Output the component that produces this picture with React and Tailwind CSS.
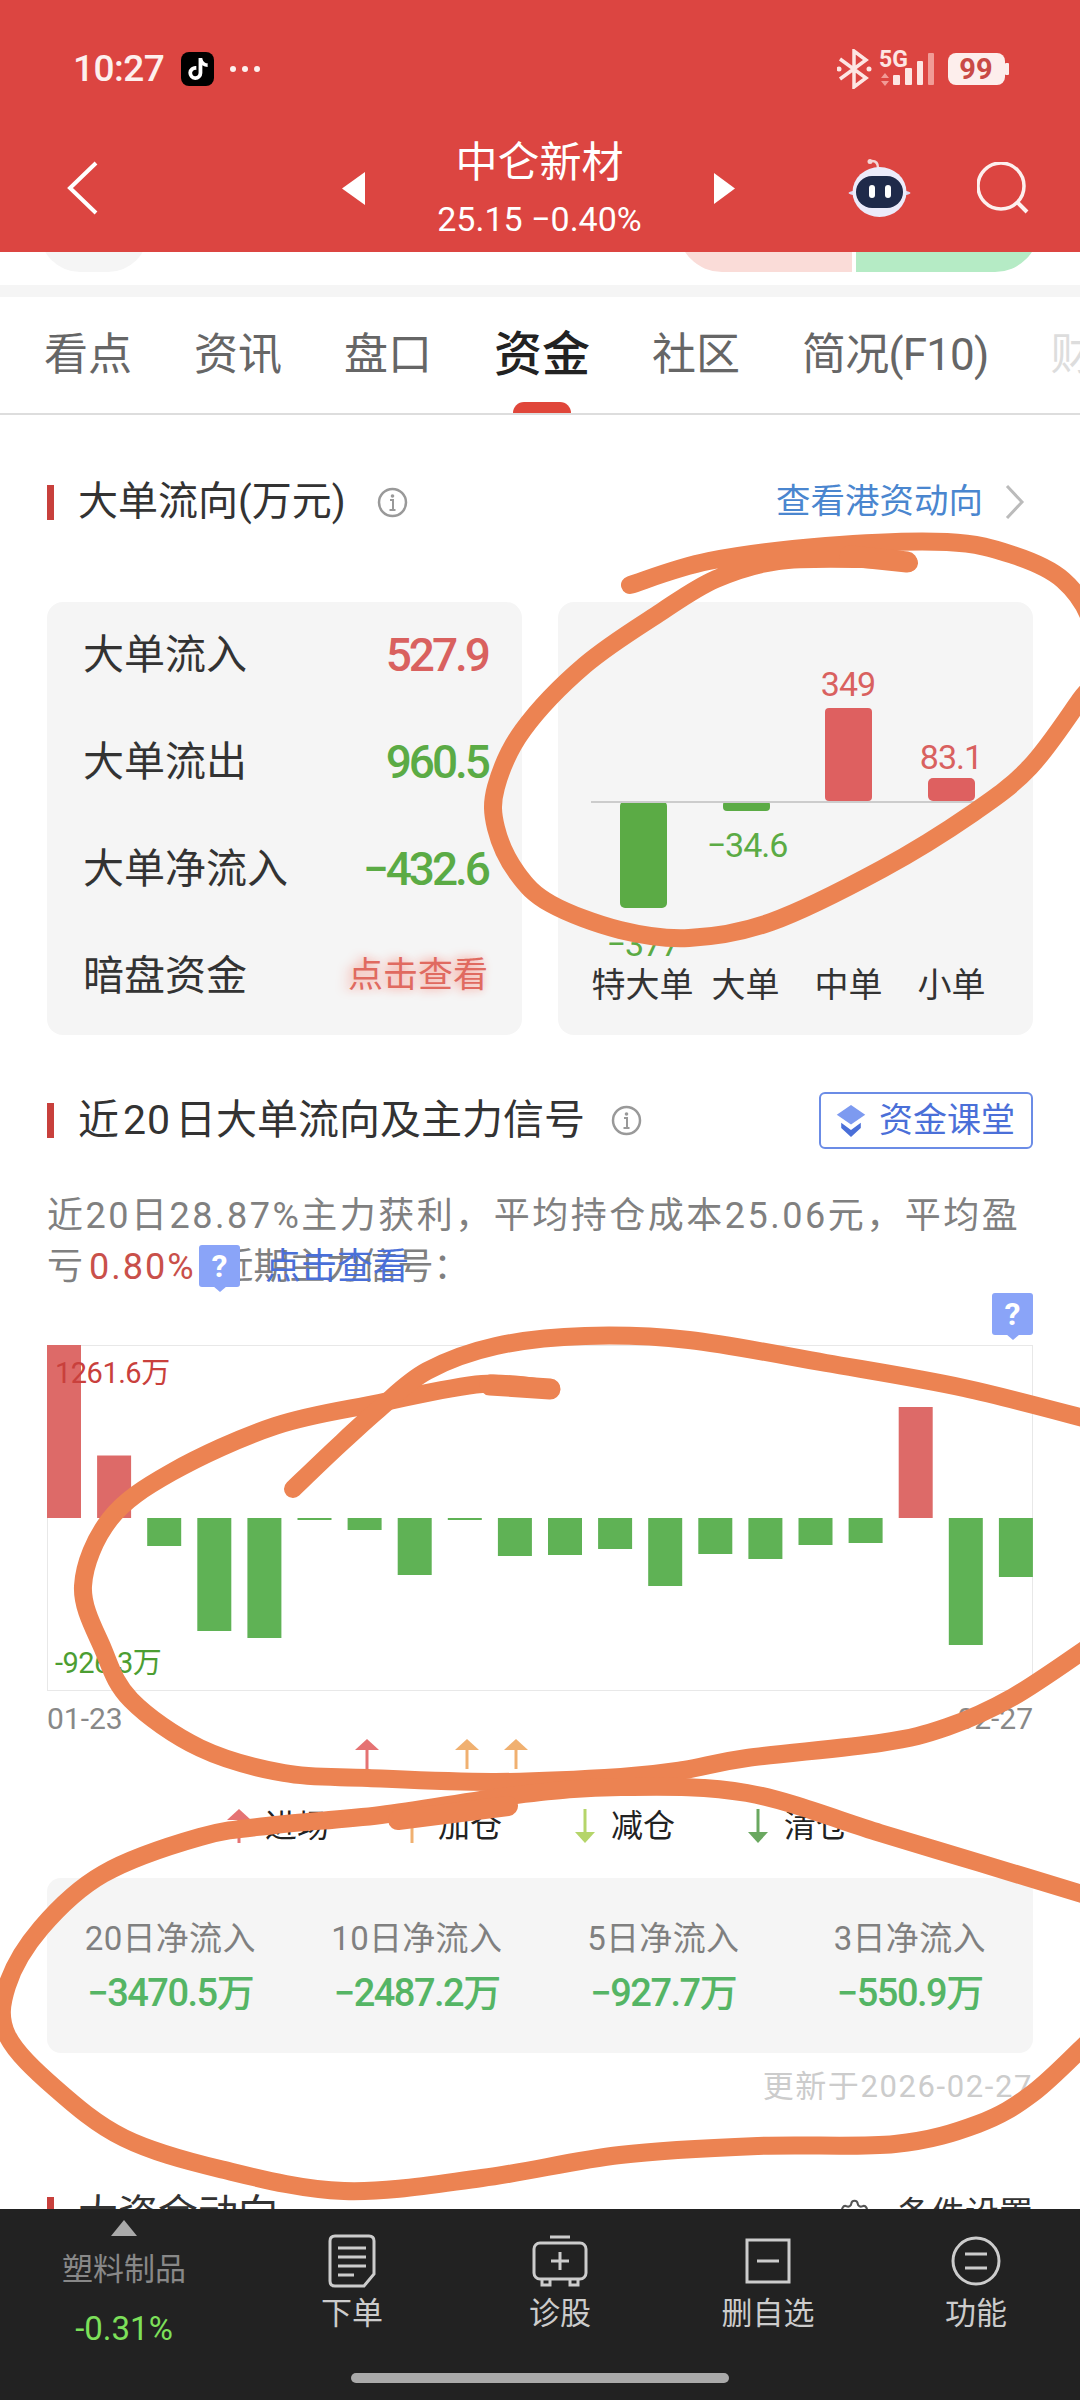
import React from 'react';
import { Settings } from 'lucide-react';
import { FaTiktok } from 'react-icons/fa6';

const dailyBars = [173, 62.5, -28, -113, -120, -2, -12, -57, -2, -38, -37, -31, -68, -36, -41, -27, -25, 111, -127, -59];

const stats = [
  { label: '20日净流入', value: '−3470.5万' },
  { label: '10日净流入', value: '−2487.2万' },
  { label: '5日净流入', value: '−927.7万' },
  { label: '3日净流入', value: '−550.9万' },
];

const legend = [
  { label: '进场', color: '#e57373', up: true },
  { label: '加仓', color: '#f0b070', up: true },
  { label: '减仓', color: '#b5d56a', up: false },
  { label: '清仓', color: '#6aa860', up: false },
];

// hand drawn rings on top of the screenshot
const strokes = [
  { w: 18, pts: [[630, 585], [709, 561], [826, 546], [947, 542], [1013, 555], [1063, 580], [1092, 625], [1092, 680], [1080, 700], [1030, 767], [973, 813], [882, 869], [771, 922], [689, 938], [620, 930], [551, 904], [517, 873], [496, 828], [496, 787], [523, 730], [585, 665], [661, 612], [716, 579], [778, 561], [861, 559], [909, 563]] },
  { w: 21, pts: [[850, 556], [907, 562]] },
  { w: 18, pts: [[551, 1389], [482, 1384], [379, 1403], [275, 1426], [172, 1472], [110, 1519], [83, 1586], [103, 1649], [131, 1700], [200, 1748], [284, 1773], [368, 1778], [495, 1782], [621, 1777], [684, 1770], [747, 1758], [880, 1743], [947, 1727], [1013, 1697], [1090, 1646]] },
  { w: 21, pts: [[490, 1385], [550, 1389]] },
  { w: 18, pts: [[1095, 1421], [964, 1388], [826, 1363], [689, 1340], [585, 1336], [496, 1346], [427, 1371], [379, 1409], [337, 1447], [293, 1489]] },
  { w: 18, pts: [[1095, 1898], [980, 1863], [880, 1833], [747, 1793], [621, 1787], [516, 1795], [381, 1815], [275, 1825], [200, 1837], [103, 1874], [41, 1928], [7, 1986], [7, 2035], [55, 2088], [124, 2138], [220, 2169], [344, 2191], [482, 2178], [620, 2155], [758, 2146], [895, 2144], [978, 2124], [1033, 2093], [1090, 2040]] },
  { w: 20, pts: [[508, 1806], [398, 1820]] },
];

const smoothPath = (pts) => {
  let d = `M${pts[0][0]} ${pts[0][1]}`;
  for (let i = 0; i < pts.length - 1; i++) {
    const p0 = pts[i - 1] || pts[i];
    const p1 = pts[i];
    const p2 = pts[i + 1];
    const p3 = pts[i + 2] || p2;
    d += ` C${p1[0] + (p2[0] - p0[0]) / 6} ${p1[1] + (p2[1] - p0[1]) / 6} ${p2[0] - (p3[0] - p1[0]) / 6} ${p2[1] - (p3[1] - p1[1]) / 6} ${p2[0]} ${p2[1]}`;
  }
  return d;
};

const InfoIcon = () => (
  <svg width="31" height="31" viewBox="0 0 31 31" className="shrink-0">
    <circle cx="15.5" cy="15.5" r="13.5" fill="none" stroke="#999" strokeWidth="2.5" />
    <circle cx="15.5" cy="9" r="1.8" fill="#999" />
    <path d="M13 13h3v10M12.5 23h6" fill="none" stroke="#999" strokeWidth="2" />
  </svg>
);

const Arrow = ({ color, up, height = 34 }) => (
  <svg width="24" height={height} viewBox={`0 0 24 ${height}`} className="shrink-0">
    {up ? (
      <>
        <path d={`M12 ${height}V8`} stroke={color} strokeWidth="3" />
        <path d="M12 0L24 11H0Z" fill={color} />
      </>
    ) : (
      <>
        <path d={`M12 0V${height - 8}`} stroke={color} strokeWidth="3" />
        <path d={`M12 ${height}L22 ${height - 11}H2Z`} fill={color} />
      </>
    )}
  </svg>
);

const HelpBadge = ({ className }) => (
  <div className={`w-[41px] h-[42px] bg-[#8aa4f8] rounded-[3px] flex items-center justify-center text-white text-[32px] tracking-normal font-bold ${className}`}>
    ?
    <span className="absolute left-1/2 -translate-x-1/2 -bottom-[5px] w-0 h-0 border-l-[7px] border-r-[7px] border-t-[6px] border-l-transparent border-r-transparent border-t-[#8aa4f8]" />
  </div>
);

const SectionTitle = ({ children }) => (
  <div className="flex items-center">
    <div className="w-[7px] h-[35px] bg-[#c8403c]" />
    <span className="ml-[24px] text-[40px] leading-[40px] text-[#333] whitespace-nowrap">{children}</span>
  </div>
);

const FlowRow = ({ label, value, color }) => (
  <div className="h-[107px] shrink-0 flex items-center justify-between">
    <span className="text-[41px] text-[#333]">{label}</span>
    <span className={`text-[46px] font-medium tracking-[-3px] ${color}`}>{value}</span>
  </div>
);

const ToolItem = ({ icon, label }) => (
  <div className="flex flex-col items-center pt-[24px]">
    <div className="h-[56px] flex items-center">{icon}</div>
    <span className="mt-[5px] text-[31px] leading-[40px] text-[#ccc]">{label}</span>
  </div>
);

const MiniChart = () => (
  <svg width="475" height="358" viewBox="0 0 475 358" className="block">
    <rect x="62" y="199" width="47" height="107" rx="5" fill="#5bab45" />
    <rect x="165" y="199" width="47" height="10" rx="4" fill="#5bab45" />
    <rect x="267" y="106" width="47" height="93" rx="4" fill="#de6060" />
    <rect x="370" y="176" width="47" height="23" rx="5" fill="#de6060" />
    <rect x="33" y="199" width="390" height="2" fill="#ccc" />
    <text x="290" y="94" textAnchor="middle" fontSize="34" letterSpacing="-1" fill="#d9615f">349</text>
    <text x="393" y="167" textAnchor="middle" fontSize="34" letterSpacing="-1" fill="#d9615f">83.1</text>
    <text x="189" y="255" textAnchor="middle" fontSize="34" letterSpacing="-1" fill="#5bab45">−34.6</text>
    <text x="85" y="354" textAnchor="middle" fontSize="34" letterSpacing="-1" fill="#5bab45">−377</text>
  </svg>
);

const DailyChart = () => (
  <div className="relative h-[346px] border border-[#e8e8e8]">
    <svg width="986" height="346" viewBox="0 0 986 346" className="absolute -left-px -top-px">
      {dailyBars.map((h, i) => {
        const x = i * 50.1;
        return h > 0
          ? <rect key={i} x={x} y={173 - h} width="34" height={h} fill="#dd6a68" />
          : <rect key={i} x={x} y={173} width="34" height={-h} fill="#5fb255" />;
      })}
    </svg>
    <span className="absolute left-[7px] top-[7px] text-[29px] leading-[40px] tracking-[-0.5px] text-[#c9403c]">1261.6万</span>
    <span className="absolute left-[7px] bottom-[7px] text-[29px] leading-[40px] tracking-[-0.5px] text-[#4c9e32]">-926.3万</span>
  </div>
);

export default function App() {
  return (
    <div className="relative w-[1080px] h-[2400px] overflow-hidden bg-white flex flex-col font-['Roboto','Noto_Sans_CJK_SC',sans-serif]">
      {/* red header */}
      <header className="h-[252px] shrink-0 bg-[#dc4541] text-[#fdf0ee]">
        <div className="h-[40px] mt-[49px] flex items-center relative">
          <span className="ml-[73px] text-[37px] font-medium tracking-[-0.5px]">10:27</span>
          <div className="ml-[17px] w-[33px] h-[34px] bg-black rounded-[8px] flex items-center justify-center">
            <FaTiktok className="text-white text-[22px]" />
          </div>
          <div className="ml-[16px] flex gap-[6px]">
            <i className="w-[6px] h-[6px] rounded-full bg-[#fdf0ee]" />
            <i className="w-[6px] h-[6px] rounded-full bg-[#fdf0ee]" />
            <i className="w-[6px] h-[6px] rounded-full bg-[#fdf0ee]" />
          </div>
          <svg width="172" height="40" viewBox="0 0 172 40" className="ml-auto mr-[71px]">
            <path d="M3 10L29 29L17 38V2L29 11L3 30" fill="none" stroke="#fde6e3" strokeWidth="3.5" />
            <circle cx="2" cy="20" r="2.5" fill="#fde6e3" />
            <circle cx="32" cy="20" r="2.5" fill="#fde6e3" />
            <text x="42" y="18" fontSize="23" fontWeight="700" fill="#fde6e3">5G</text>
            <path d="M48 24l4 5h-8zM48 37l4-5h-8z" fill="#f19b96" />
            <rect x="56" y="26" width="7" height="10" rx="1" fill="#fde6e3" />
            <rect x="68" y="19" width="7" height="17" rx="1" fill="#fde6e3" />
            <rect x="80" y="12" width="6" height="24" rx="1" fill="#fde6e3" />
            <rect x="91" y="4" width="6" height="32" rx="1" fill="#f19b96" />
            <rect x="111" y="4" width="57" height="32" rx="8" fill="#fdeeec" />
            <rect x="168" y="14" width="4" height="12" rx="1" fill="#fdeeec" />
            <text x="139" y="30" textAnchor="middle" fontSize="29" fontWeight="700" fill="#c94a45">99</text>
          </svg>
        </div>
        <div className="mt-[43px] h-[112px] flex items-center pl-[67px]">
          <svg width="31" height="54" viewBox="0 0 31 54">
            <path d="M29 2L3 27L29 52" fill="none" stroke="#fff" strokeWidth="4" />
          </svg>
          <svg width="23" height="33" viewBox="0 0 23 33" className="ml-[244px]">
            <path d="M23 0V33L0 16.5Z" fill="#fff" />
          </svg>
          <div className="w-[349px] flex flex-col items-center">
            <span className="text-[42px] leading-[62px] text-white">中仑新材</span>
            <span className="text-[34px] leading-[50px] text-white whitespace-pre">25.15 −0.40%</span>
          </div>
          <svg width="21" height="31" viewBox="0 0 21 31">
            <path d="M0 0V31L21 15.5Z" fill="#fff" />
          </svg>
          <svg width="63" height="58" viewBox="0 0 63 58" className="ml-[113px]">
            <path d="M30 9C30 4 28 2 24 2" fill="none" stroke="#f4d6d6" strokeWidth="2.5" />
            <circle cx="22" cy="2.5" r="2.5" fill="#f4d6d6" />
            <ellipse cx="31.5" cy="34" rx="31" ry="4" fill="#dcd8f0" />
            <ellipse cx="31.5" cy="33" rx="27" ry="25" fill="#ecebfa" />
            <rect x="8" y="17" width="47" height="32" rx="16" fill="#1f2a4a" />
            <rect x="21" y="26" width="6" height="13" rx="3" fill="#fff" />
            <rect x="37" y="26" width="6" height="13" rx="3" fill="#fff" />
          </svg>
          <svg width="53" height="53" viewBox="0 0 53 53" className="ml-[66px]">
            <circle cx="24" cy="24" r="23" fill="none" stroke="#fdf0ee" strokeWidth="3.5" />
            <path d="M40 40L50 50" stroke="#fdf0ee" strokeWidth="4" />
          </svg>
        </div>
      </header>

      {/* scrolled page */}
      <main className="flex-1 min-h-0 overflow-hidden">
        <div className="h-[33px]">
          <div className="h-[20px] overflow-hidden flex items-end">
            <div className="ml-[40px] w-[108px] h-[60px] shrink-0 bg-[#f5f5f5] rounded-b-[40px]" />
            <div className="ml-[530px] w-[174px] h-[60px] shrink-0 bg-[#fadcd8] rounded-bl-[44px]" />
            <div className="ml-[4px] w-[183px] h-[60px] shrink-0 bg-[#b5ebc5] rounded-br-[44px]" />
          </div>
        </div>
        <div className="h-[12px] bg-[#f5f5f5]" />

        <nav className="h-[118px] flex items-center pl-[44px] gap-[62px] overflow-hidden border-b-2 border-[#ddd] whitespace-nowrap text-[44px] leading-[70px] text-[#666]">
          <span>看点</span>
          <span>资讯</span>
          <span>盘口</span>
          <span className="relative text-[48px] font-medium text-[#222]">
            资金
            <i className="absolute left-1/2 -translate-x-1/2 top-[82px] w-[58px] h-[11px] rounded-t-full bg-[#e0463a]" />
          </span>
          <span>社区</span>
          <span className="tracking-[-0.8px]">简况(F10)</span>
          <span className="text-[#ddd]">财务</span>
        </nav>

        <section className="px-[47px]">
          <div className="mt-[67px] h-[40px] flex items-center">
            <SectionTitle>大单流向(万元)</SectionTitle>
            <div className="ml-[31px]"><InfoIcon /></div>
            <span className="ml-auto text-[34.5px] text-[#4a86cf]">查看港资动向</span>
            <svg width="20" height="36" viewBox="0 0 20 36" className="ml-[22px] mr-[8px]">
              <path d="M2 2L17 18L2 34" fill="none" stroke="#bbb" strokeWidth="3" />
            </svg>
          </div>

          <div className="mt-[80px] grid grid-cols-2 gap-[36px] h-[430px]">
            <div className="bg-[#f5f5f5] rounded-[16px] pl-[36px] pr-[34px] pb-[5px] flex flex-col justify-center">
              <FlowRow label="大单流入" value="527.9" color="text-[#d9615f]" />
              <FlowRow label="大单流出" value="960.5" color="text-[#5bab45]" />
              <FlowRow label="大单净流入" value="−432.6" color="text-[#5bab45]" />
              <div className="h-[107px] shrink-0 flex items-center justify-between">
                <span className="text-[41px] text-[#333]">暗盘资金</span>
                <span className="text-[35px] text-[#e06a60] [text-shadow:-6px_0_12px_#f6b8b0,0_0_8px_#f6b8b0]">点击查看</span>
              </div>
            </div>
            <div className="bg-[#f5f5f5] rounded-[16px]">
              <MiniChart />
              <div className="grid grid-cols-4 pl-[33px] pr-[30px] text-center text-[34px] leading-[50px] text-[#333]">
                <span>特大单</span>
                <span>大单</span>
                <span>中单</span>
                <span>小单</span>
              </div>
            </div>
          </div>

          <div className="mt-[60px] h-[57px] flex items-center">
            <SectionTitle>
              <span className="text-[41px]">近<span className="mx-[4px] tracking-[1px]">20</span>日大单流向及主力信号</span>
            </SectionTitle>
            <div className="ml-[26px]"><InfoIcon /></div>
            <div className="ml-auto w-[214px] h-[57px] border-2 border-[#6b8ce6] rounded-[6px] flex items-center pl-[14px]">
              <svg width="32" height="32" viewBox="0 0 32 36">
                <path d="M16 0L32 11L16 22L0 11Z" fill="#7d9af0" />
                <path d="M5 20V26L16 36L27 26V20L16 28Z" fill="#4a6fd8" />
              </svg>
              <span className="ml-[12px] text-[34px] text-[#4a6fd8]">资金课堂</span>
            </div>
          </div>

          <div className="relative mt-[42px] text-[36px] leading-[51px] text-[#808080] whitespace-nowrap">
            <p className="tracking-[2.5px]">近20日28.87%主力获利，平均持仓成本25.06元，平均盈</p>
            <p>亏<span className="ml-[6px] tracking-[2px] text-[#c9504a]">0.80%</span><span className="inline-block -mr-[14px]">，</span>近期主力信号：</p>
            <HelpBadge className="absolute left-[152px] top-[54px]" />
            <span className="absolute left-[218px] top-[51px] text-[#4a6fd8]">点击查看</span>
          </div>

          <div className="relative h-[52px] flex justify-end">
            <HelpBadge className="relative" />
          </div>

          <DailyChart />

          <div className="mt-[8px] h-[40px] flex justify-between text-[30px] leading-[40px] text-[#888]">
            <span>01-23</span>
            <span>02-27</span>
          </div>

          <div className="h-[30px]">
            <svg width="986" height="30" viewBox="0 0 986 30" className="block">
              <g transform="translate(308 0)"><Arrow color="#e57373" up height={30} /></g>
              <g transform="translate(408 0)"><Arrow color="#f0b070" up height={30} /></g>
              <g transform="translate(457 0)"><Arrow color="#f0b070" up height={30} /></g>
            </svg>
          </div>

          <div className="mt-[35px] h-[44px] flex items-center pl-[180px] gap-[71px]">
            {legend.map((item) => (
              <div key={item.label} className="flex items-center gap-[14px]">
                <Arrow color={item.color} up={item.up} />
                <span className="text-[32px] text-[#222]">{item.label}</span>
              </div>
            ))}
          </div>

          <div className="mt-[30px] h-[175px] bg-[#f5f5f5] rounded-[14px] grid grid-cols-4 items-center text-center">
            {stats.map((s) => (
              <div key={s.label}>
                <p className="text-[33px] leading-[55px] tracking-[0.3px] text-[#808080]">{s.label}</p>
                <p className="text-[38px] leading-[55px] font-medium tracking-[-1.5px] text-[#55b565]">{s.value}</p>
              </div>
            ))}
          </div>

          <p className="mt-[14px] text-right text-[31px] leading-[40px] tracking-[1.6px] text-[#ccc]">更新于2026-02-27</p>

          <div className="mt-[82px] flex items-center">
            <SectionTitle>大资金动向</SectionTitle>
            <Settings size={33} strokeWidth={1.5} className="ml-auto text-[#555]" />
            <span className="ml-[26px] text-[34px] text-[#333]">条件设置</span>
          </div>
        </section>
      </main>

      {/* bottom toolbar */}
      <footer className="h-[191px] shrink-0 bg-[#222]">
        <div className="h-[164px] grid grid-cols-[248px_repeat(4,208px)]">
          <div className="flex flex-col items-center pt-[11px]">
            <div className="w-0 h-0 border-l-[13px] border-r-[13px] border-b-[16px] border-l-transparent border-r-transparent border-b-[#aaa]" />
            <span className="mt-[14px] text-[31px] leading-[40px] text-[#888]">塑料制品</span>
            <span className="mt-[19px] text-[33px] leading-[40px] text-[#7de05a]">-0.31%</span>
          </div>
          <ToolItem
            label="下单"
            icon={
              <svg width="48" height="54" viewBox="0 0 48 54" fill="none" stroke="#ccc" strokeWidth="3">
                <path d="M7 2H41Q46 2 46 7V40L36 52H7Q2 52 2 47V7Q2 2 7 2Z" />
                <path d="M10 14H38M10 23H38M10 32H38M10 41H26" />
              </svg>
            }
          />
          <ToolItem
            label="诊股"
            icon={
              <svg width="56" height="52" viewBox="0 0 56 52" fill="none" stroke="#ccc" strokeWidth="3">
                <path d="M18 2H38" />
                <rect x="2" y="8" width="52" height="36" rx="6" />
                <path d="M28 17V35M19 26H37M10 45V50H18V45M38 45V50H46V45" />
              </svg>
            }
          />
          <ToolItem
            label="删自选"
            icon={
              <svg width="46" height="46" viewBox="0 0 46 46" fill="none" stroke="#ccc" strokeWidth="3">
                <rect x="2" y="2" width="42" height="42" />
                <path d="M12 23H34" />
              </svg>
            }
          />
          <ToolItem
            label="功能"
            icon={
              <svg width="50" height="50" viewBox="0 0 50 50" fill="none" stroke="#ccc" strokeWidth="3">
                <circle cx="25" cy="25" r="23" />
                <path d="M14 18H36M14 32H36" />
              </svg>
            }
          />
        </div>
        <div className="mx-auto w-[378px] h-[10px] rounded-full bg-[#aaa]" />
      </footer>

      {/* orange pen marks */}
      <svg width="1080" height="2400" viewBox="0 0 1080 2400" className="absolute inset-0 pointer-events-none">
        {strokes.map((s, i) => (
          <path key={i} d={smoothPath(s.pts)} fill="none" stroke="#ec8352" strokeWidth={s.w} strokeLinecap="round" strokeLinejoin="round" />
        ))}
      </svg>
    </div>
  );
}
